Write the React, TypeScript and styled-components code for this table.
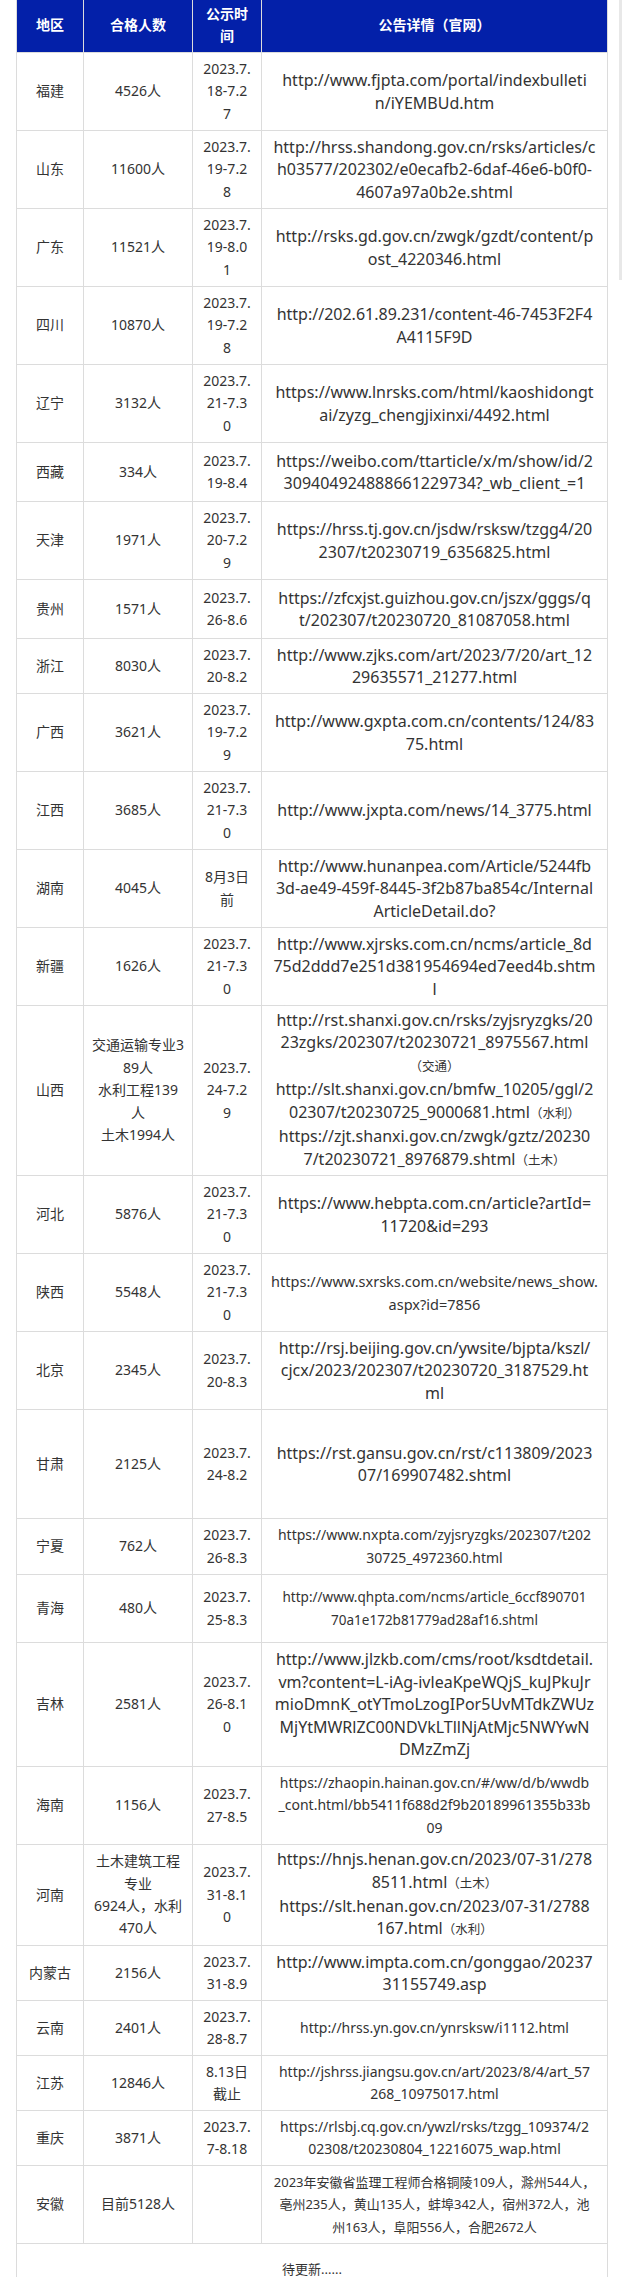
import React from 'react';
import styled, { createGlobalStyle } from 'styled-components';

const GlobalStyle = createGlobalStyle`
  html, body {
    margin: 0;
    padding: 0;
    background: #fff;
  }
  body {
    font-family: "Noto Sans", "Noto Sans CJK SC", sans-serif;
    color: #333;
  }
`;

const Page = styled.div`
  padding: 0 15px 0 16px;
`;

const ScrollThumb = styled.div`
  position: fixed;
  top: 0;
  right: 0;
  width: 3px;
  height: 280px;
  background: #e8e8e8;
`;

const Table = styled.table`
  width: 591px;
  border-collapse: collapse;
  table-layout: fixed;
  font-size: 14px;
  line-height: 22.4px;
  color: #333;
`;

const HeadCell = styled.th`
  height: 49px;
  padding: 0 8px 3px;
  background: #0320a9;
  border: 1px solid #dcdcdc;
  border-top: none;
  color: #fff;
  font-weight: 700;
  font-size: 14px;
  line-height: 21.7px;
  text-align: center;
  vertical-align: middle;
`;

const Row = styled.tr<{ $h: number }>`
  height: ${({ $h }) => $h}px;
`;

const Cell = styled.td<{ $size?: number }>`
  padding: 0 6px;
  border: 1px solid #dcdcdc;
  text-align: center;
  vertical-align: middle;
  font-size: ${({ $size }) => $size || 14}px;
  line-height: 22.4px;
  color: #333;
`;

const Line = styled.div`
  white-space: nowrap;
`;

const Note = styled.span`
  font-size: 12.5px;
`;

const More = styled.td`
  height: 50px;
  padding: 0;
  border: 1px solid #dcdcdc;
  text-align: center;
  vertical-align: middle;
  font-size: 13px;
  color: #333;
`;

interface IRow {
  region: string;
  count: string[];
  date: string[];
  detail: string[];
  size?: number;
  h: number;
}

const rows: IRow[] = [
  {
    region: '福建',
    count: ['4526人'],
    date: ['2023.7.', '18-7.2', '7'],
    detail: ['http://www.fjpta.com/portal/indexbulleti', 'n/iYEMBUd.htm'],
    h: 78,
  },
  {
    region: '山东',
    count: ['11600人'],
    date: ['2023.7.', '19-7.2', '8'],
    detail: [
      'http://hrss.shandong.gov.cn/rsks/articles/c',
      'h03577/202302/e0ecafb2-6daf-46e6-b0f0-',
      '4607a97a0b2e.shtml',
    ],
    h: 78,
  },
  {
    region: '广东',
    count: ['11521人'],
    date: ['2023.7.', '19-8.0', '1'],
    detail: ['http://rsks.gd.gov.cn/zwgk/gzdt/content/p', 'ost_4220346.html'],
    h: 78,
  },
  {
    region: '四川',
    count: ['10870人'],
    date: ['2023.7.', '19-7.2', '8'],
    detail: ['http://202.61.89.231/content-46-7453F2F4', 'A4115F9D'],
    h: 78,
  },
  {
    region: '辽宁',
    count: ['3132人'],
    date: ['2023.7.', '21-7.3', '0'],
    detail: [
      'https://www.lnrsks.com/html/kaoshidongt',
      'ai/zyzg_chengjixinxi/4492.html',
    ],
    h: 78,
  },
  {
    region: '西藏',
    count: ['334人'],
    date: ['2023.7.', '19-8.4'],
    detail: [
      'https://weibo.com/ttarticle/x/m/show/id/2',
      '309404924888661229734?_wb_client_=1',
    ],
    h: 59,
  },
  {
    region: '天津',
    count: ['1971人'],
    date: ['2023.7.', '20-7.2', '9'],
    detail: [
      'https://hrss.tj.gov.cn/jsdw/rsksw/tzgg4/20',
      '2307/t20230719_6356825.html',
    ],
    h: 78,
  },
  {
    region: '贵州',
    count: ['1571人'],
    date: ['2023.7.', '26-8.6'],
    detail: [
      'https://zfcxjst.guizhou.gov.cn/jszx/gggs/q',
      't/202307/t20230720_81087058.html',
    ],
    h: 59,
  },
  {
    region: '浙江',
    count: ['8030人'],
    date: ['2023.7.', '20-8.2'],
    detail: ['http://www.zjks.com/art/2023/7/20/art_12', '29635571_21277.html'],
    h: 55,
  },
  {
    region: '广西',
    count: ['3621人'],
    date: ['2023.7.', '19-7.2', '9'],
    detail: ['http://www.gxpta.com.cn/contents/124/83', '75.html'],
    h: 78,
  },
  {
    region: '江西',
    count: ['3685人'],
    date: ['2023.7.', '21-7.3', '0'],
    detail: ['http://www.jxpta.com/news/14_3775.html'],
    h: 78,
  },
  {
    region: '湖南',
    count: ['4045人'],
    date: ['8月3日', '前'],
    detail: [
      'http://www.hunanpea.com/Article/5244fb',
      '3d-ae49-459f-8445-3f2b87ba854c/Internal',
      'ArticleDetail.do?',
    ],
    h: 78,
  },
  {
    region: '新疆',
    count: ['1626人'],
    date: ['2023.7.', '21-7.3', '0'],
    detail: [
      'http://www.xjrsks.com.cn/ncms/article_8d',
      '75d2ddd7e251d381954694ed7eed4b.shtm',
      'l',
    ],
    h: 78,
  },
  {
    region: '山西',
    count: ['交通运输专业3', '89人', '水利工程139', '人', '土木1994人'],
    date: ['2023.7.', '24-7.2', '9'],
    detail: [
      'http://rst.shanxi.gov.cn/rsks/zyjsryzgks/20',
      '23zgks/202307/t20230721_8975567.html',
      '（交通）',
      'http://slt.shanxi.gov.cn/bmfw_10205/ggl/2',
      '02307/t20230725_9000681.html（水利）',
      'https://zjt.shanxi.gov.cn/zwgk/gztz/20230',
      '7/t20230721_8976879.shtml（土木）',
    ],
    h: 170,
  },
  {
    region: '河北',
    count: ['5876人'],
    date: ['2023.7.', '21-7.3', '0'],
    detail: ['https://www.hebpta.com.cn/article?artId=', '11720&id=293'],
    h: 78,
  },
  {
    region: '陕西',
    count: ['5548人'],
    date: ['2023.7.', '21-7.3', '0'],
    detail: [
      'https://www.sxrsks.com.cn/website/news_show.',
      'aspx?id=7856',
    ],
    size: 14.5,
    h: 78,
  },
  {
    region: '北京',
    count: ['2345人'],
    date: ['2023.7.', '20-8.3'],
    detail: [
      'http://rsj.beijing.gov.cn/ywsite/bjpta/kszl/',
      'cjcx/2023/202307/t20230720_3187529.ht',
      'ml',
    ],
    h: 78,
  },
  {
    region: '甘肃',
    count: ['2125人'],
    date: ['2023.7.', '24-8.2'],
    detail: ['https://rst.gansu.gov.cn/rst/c113809/2023', '07/169907482.shtml'],
    h: 109,
  },
  {
    region: '宁夏',
    count: ['762人'],
    date: ['2023.7.', '26-8.3'],
    detail: [
      'https://www.nxpta.com/zyjsryzgks/202307/t202',
      '30725_4972360.html',
    ],
    size: 14,
    h: 56,
  },
  {
    region: '青海',
    count: ['480人'],
    date: ['2023.7.', '25-8.3'],
    detail: [
      'http://www.qhpta.com/ncms/article_6ccf890701',
      '70a1e172b81779ad28af16.shtml',
    ],
    size: 13.5,
    h: 68,
  },
  {
    region: '吉林',
    count: ['2581人'],
    date: ['2023.7.', '26-8.1', '0'],
    detail: [
      'http://www.jlzkb.com/cms/root/ksdtdetail.',
      'vm?content=L-iAg-ivleaKpeWQjS_kuJPkuJr',
      'mioDmnK_otYTmoLzogIPor5UvMTdkZWUz',
      'MjYtMWRlZC00NDVkLTllNjAtMjc5NWYwN',
      'DMzZmZj',
    ],
    h: 124,
  },
  {
    region: '海南',
    count: ['1156人'],
    date: ['2023.7.', '27-8.5'],
    detail: [
      'https://zhaopin.hainan.gov.cn/#/ww/d/b/wwdb',
      '_cont.html/bb5411f688d2f9b20189961355b33b',
      '09',
    ],
    size: 14,
    h: 78,
  },
  {
    region: '河南',
    count: ['土木建筑工程', '专业', '6924人，水利', '470人'],
    date: ['2023.7.', '31-8.1', '0'],
    detail: [
      'https://hnjs.henan.gov.cn/2023/07-31/278',
      '8511.html（土木）',
      'https://slt.henan.gov.cn/2023/07-31/2788',
      '167.html（水利）',
    ],
    h: 101,
  },
  {
    region: '内蒙古',
    count: ['2156人'],
    date: ['2023.7.', '31-8.9'],
    detail: ['http://www.impta.com.cn/gonggao/20237', '31155749.asp'],
    h: 55,
  },
  {
    region: '云南',
    count: ['2401人'],
    date: ['2023.7.', '28-8.7'],
    detail: ['http://hrss.yn.gov.cn/ynrsksw/i1112.html'],
    size: 14,
    h: 55,
  },
  {
    region: '江苏',
    count: ['12846人'],
    date: ['8.13日', '截止'],
    detail: [
      'http://jshrss.jiangsu.gov.cn/art/2023/8/4/art_57',
      '268_10975017.html',
    ],
    size: 14,
    h: 55,
  },
  {
    region: '重庆',
    count: ['3871人'],
    date: ['2023.7.', '7-8.18'],
    detail: [
      'https://rlsbj.cq.gov.cn/ywzl/rsks/tzgg_109374/2',
      '02308/t20230804_12216075_wap.html',
    ],
    size: 14,
    h: 55,
  },
  {
    region: '安徽',
    count: ['目前5128人'],
    date: [],
    detail: [
      '2023年安徽省监理工程师合格铜陵109人，滁州544人，',
      '亳州235人，黄山135人，蚌埠342人，宿州372人，池',
      '州163人，阜阳556人，合肥2672人',
    ],
    size: 13,
    h: 78,
  },
];

const DetailLine: React.FC<{ text: string }> = ({ text }) => {
  const m = text.match(/^(.*?)(（[^）]+）)?$/);
  const main = m ? m[1] : text;
  const note = m && m[2];
  return (
    <Line>
      {main}
      {note && <Note>{note}</Note>}
    </Line>
  );
};

const App: React.FC = () => {
  return (
    <Page>
      <GlobalStyle />
      <ScrollThumb />
      <Table>
        <colgroup>
          <col style={{ width: 67 }} />
          <col style={{ width: 109 }} />
          <col style={{ width: 69 }} />
          <col style={{ width: 346 }} />
        </colgroup>
        <thead>
          <tr>
            <HeadCell>地区</HeadCell>
            <HeadCell>合格人数</HeadCell>
            <HeadCell>公示时间</HeadCell>
            <HeadCell>公告详情（官网）</HeadCell>
          </tr>
        </thead>
        <tbody>
          {rows.map((row) => (
            <Row key={row.region} $h={row.h}>
              <Cell>{row.region}</Cell>
              <Cell>
                {row.count.map((c, i) => (
                  <Line key={i}>{c}</Line>
                ))}
              </Cell>
              <Cell>
                {row.date.map((d, i) => (
                  <Line key={i}>{d}</Line>
                ))}
              </Cell>
              <Cell $size={row.size || 16}>
                {row.detail.map((d, i) => (
                  <DetailLine key={i} text={d} />
                ))}
              </Cell>
            </Row>
          ))}
          <tr>
            <More colSpan={4}>待更新......</More>
          </tr>
        </tbody>
      </Table>
    </Page>
  );
};

export default App;
